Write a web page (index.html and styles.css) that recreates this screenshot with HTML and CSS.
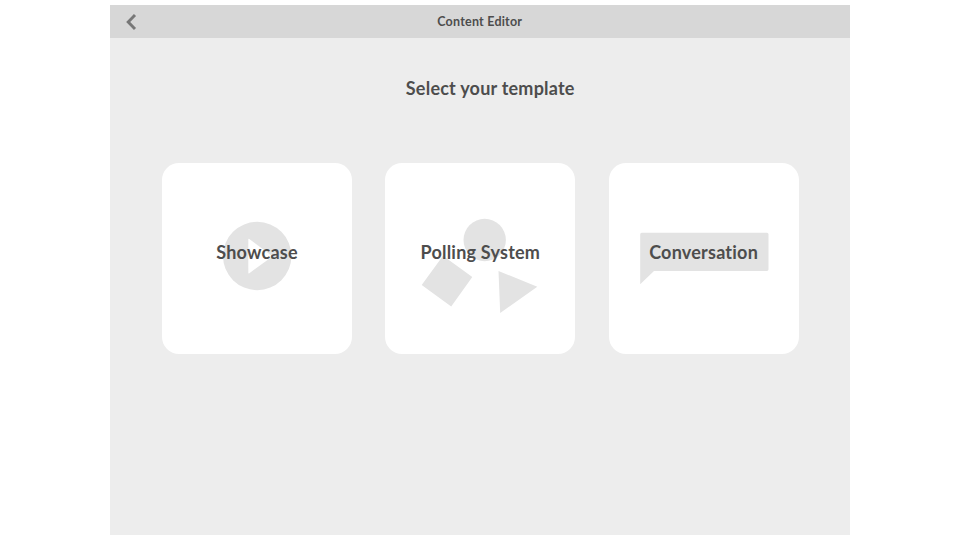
FILE: index.html
```
<!DOCTYPE html>
<html lang="en">
<head>
<meta charset="utf-8">
<title>Content Editor</title>
<link rel="stylesheet" href="styles.css">
</head>
<body>
<div class="app">
  <header class="bar">
    <button class="back" aria-label="Back"><svg width="12" height="18" viewBox="0 0 12 18"><path d="M10 2 3.2 9l6.8 7"/></svg></button>
    <h1 class="title"><span>Content Editor</span></h1>
  </header>
  <main>
    <h2 class="prompt"><span>Select your template</span></h2>
    <div class="cards">
      <a class="card showcase">
        <svg class="art" viewBox="0 0 190 191"><circle cx="95.2" cy="93" r="34.2"/><path class="cut" d="M86.3 76.5v33.2q0 1.2 1 .5l22-16q1-.9 0-1.7l-22-16.5q-1-.7-1 .5z"/></svg>
        <span class="label">Showcase</span>
      </a>
      <a class="card polling">
        <svg class="art" viewBox="0 0 190 191"><circle cx="99.7" cy="77" r="21.2"/><path d="M58 92.7 87.3 114 66.2 143.5 36.7 122zM113.5 108 152.3 123.8 115.2 150z"/></svg>
        <span class="label">Polling System</span>
      </a>
      <a class="card conversation">
        <svg class="art" viewBox="0 0 190 191"><path d="M32.7 69.8H158q1.5 0 1.5 1.5v35q0 1.7-1.5 1.7H45L31.2 121.3v-50q0-1.5 1.5-1.5z"/></svg>
        <span class="label">Conversation</span>
      </a>
    </div>
  </main>
</div>
</body>
</html>
```
FILE: styles.css
```
* { box-sizing: border-box; }
body {
  margin: 0;
  height: 540px;
  background: #fff;
  font-family: Lato, "Liberation Sans", sans-serif;
  font-variant-ligatures: none;
  letter-spacing: 0.22px;
  color: #4d4d4d;
  overflow: hidden;
}
.app {
  width: 739.5px;
  height: 530px;
  margin: 5px 0 0 110px;
  background: #ededed;
  display: flex;
  flex-direction: column;
}
.bar {
  height: 32.5px;
  background: #d7d7d7;
  display: grid;
  grid-template-columns: 40px 1fr 40px;
  align-items: center;
}
.back {
  border: 0;
  padding: 0 0 0 15px;
  background: none;
  display: flex;
}
.back svg { fill: none; stroke: #777; stroke-width: 2.9; }
h1, h2 { margin: 0; font-weight: 700; text-align: center; white-space: nowrap; }
.title { padding-top: 1px; font-size: 12.5px; line-height: 32px; }
.prompt { padding: 37px 0 0 21px; font-size: 18px; line-height: 26px; }
.cards {
  display: grid;
  grid-template-columns: repeat(3, 190px);
  gap: 33.3px;
  margin: 62.5px 0 0 52px;
}
.card {
  height: 191px;
  border-radius: 17px;
  background: #fff;
  display: grid;
  place-items: start center;
}
.card > * { grid-area: 1 / 1; }
.art { width: 190px; height: 191px; fill: #e3e3e3; }
.art .cut { fill: #fff; }
.label {
  margin-top: 76px;
  font-size: 18px;
  line-height: 26px;
  font-weight: 700;
  white-space: nowrap;
}
```
